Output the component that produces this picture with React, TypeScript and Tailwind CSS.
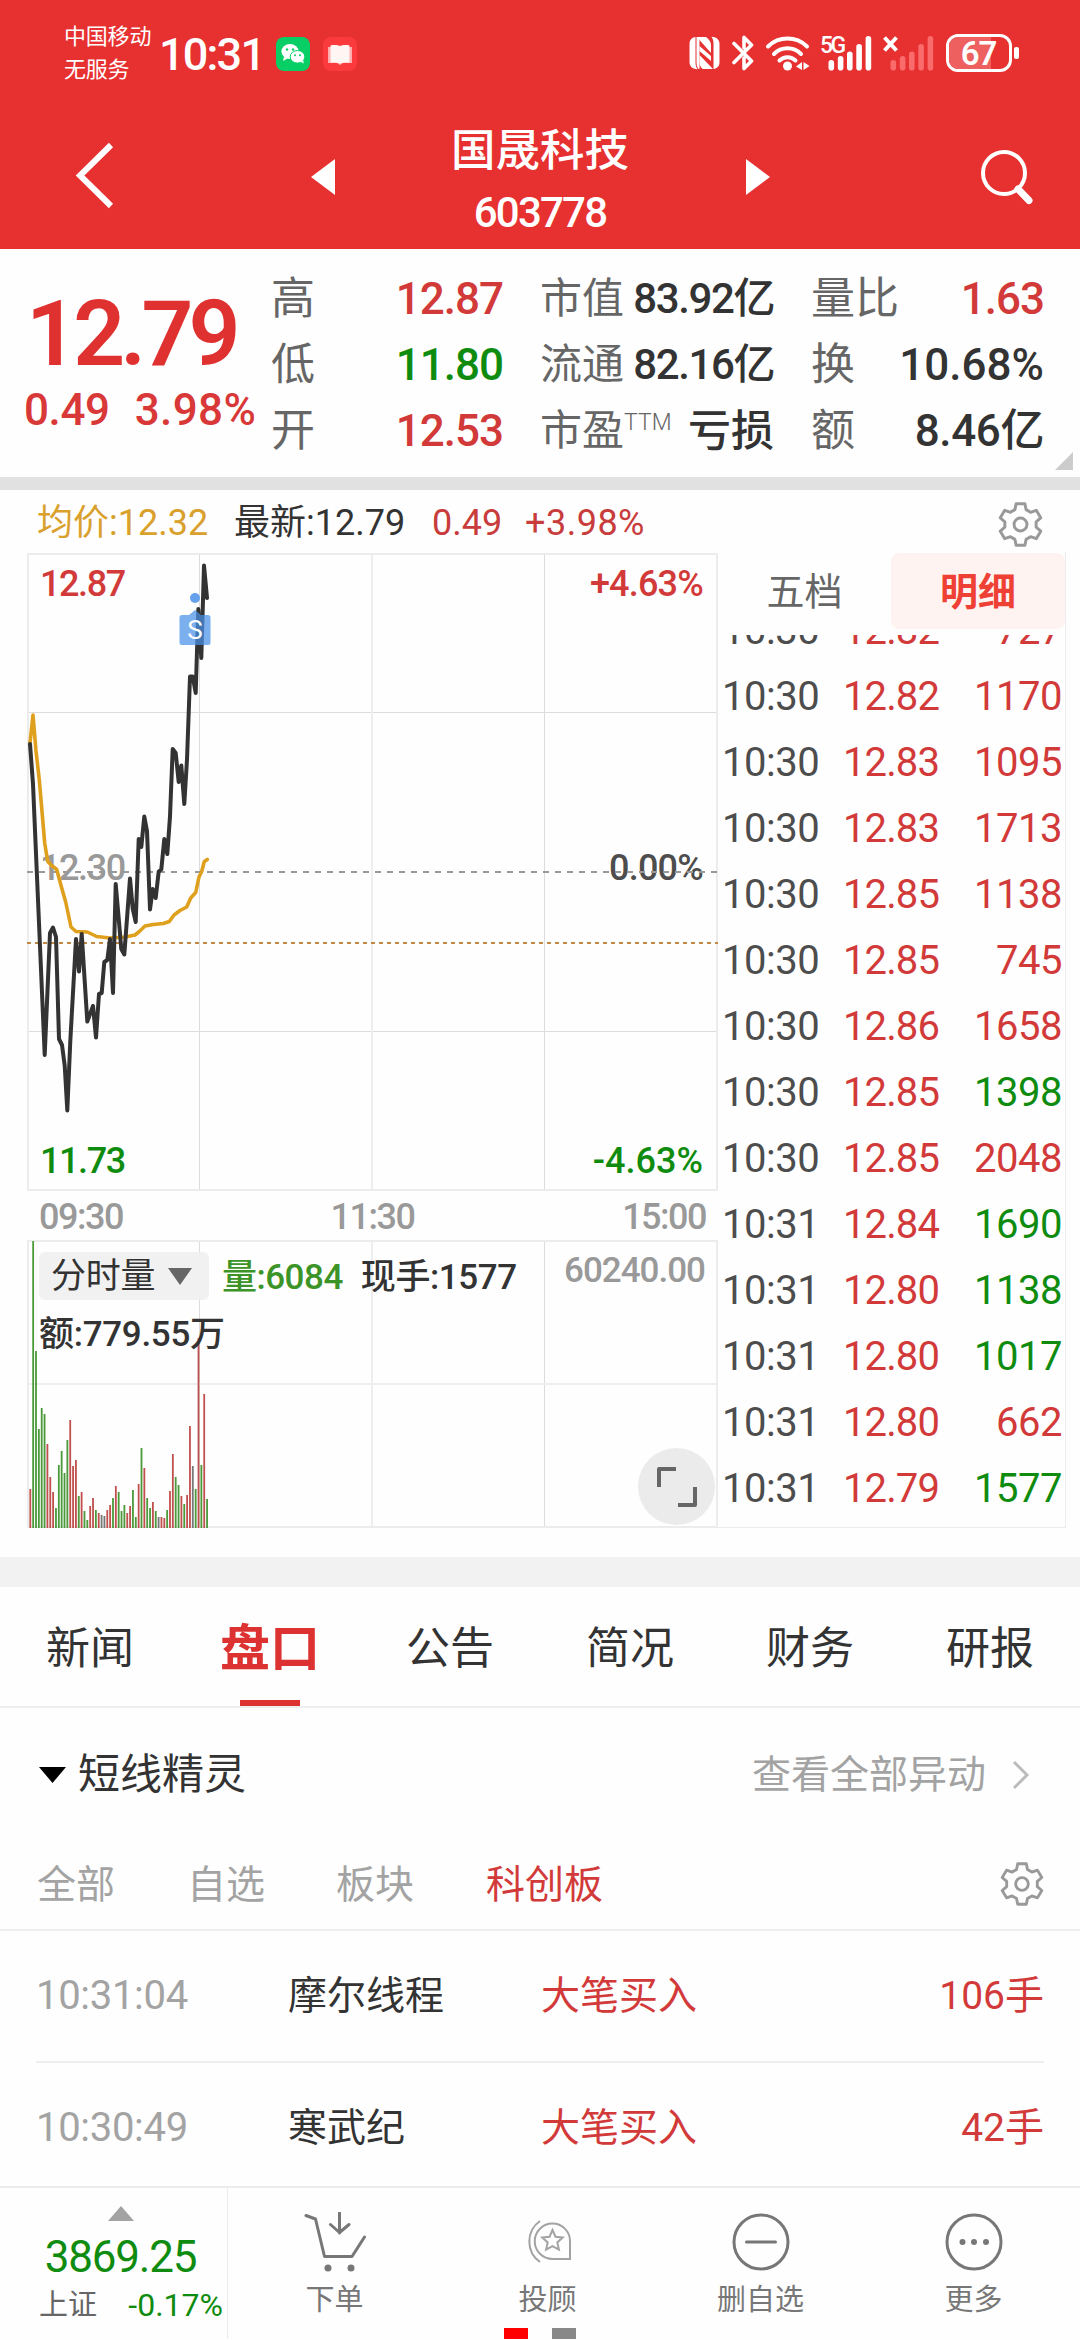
import type { ReactNode } from 'react';

type Tone = 'up' | 'down' | 'plain';

interface Trade {
  time: string;
  price: string;
  volume: string;
  tone: Tone;
}

const toneClass: Record<Tone, string> = {
  up: 'text-[#d23a3a]',
  down: 'text-[#0f8c0f]',
  plain: 'text-[#333333]',
};

const trades: Trade[] = [
  { time: '10:30', price: '12.82', volume: '727', tone: 'up' },
  { time: '10:30', price: '12.82', volume: '1170', tone: 'up' },
  { time: '10:30', price: '12.83', volume: '1095', tone: 'up' },
  { time: '10:30', price: '12.83', volume: '1713', tone: 'up' },
  { time: '10:30', price: '12.85', volume: '1138', tone: 'up' },
  { time: '10:30', price: '12.85', volume: '745', tone: 'up' },
  { time: '10:30', price: '12.86', volume: '1658', tone: 'up' },
  { time: '10:30', price: '12.85', volume: '1398', tone: 'down' },
  { time: '10:30', price: '12.85', volume: '2048', tone: 'up' },
  { time: '10:31', price: '12.84', volume: '1690', tone: 'down' },
  { time: '10:31', price: '12.80', volume: '1138', tone: 'down' },
  { time: '10:31', price: '12.80', volume: '1017', tone: 'down' },
  { time: '10:31', price: '12.80', volume: '662', tone: 'up' },
  { time: '10:31', price: '12.79', volume: '1577', tone: 'down' },
];

const pricePoints =
  '3,192 6,232 17.7,503 23,381 26,375.5 29,385 32,487 35,493 37.7,513.5 40.3,558.5 43.3,489 49,387 52,419.5 54.7,382 60.3,469.5 66,454 69,485.5 72,442 74.7,441 77.3,410 80.3,408 83,387 86,441 88.7,332 91.7,366.5 94.3,397 97.3,402.5 103,326.5 105.7,356.5 108.7,370 111.7,287 114.3,295 117.3,264.5 120,279 123,357.5 125.7,337 128.7,346 131.7,319.5 134.3,317.5 137.3,287 140.3,302 143,264.5 145.7,197 148.7,201 151.7,230 154.3,213.5 157.3,252 160,207.5 163,124.5 165.7,124.5 168.7,141 171.3,57 174.3,106 177,13.5 180,46';

const averagePoints =
  '3,191 6,163 9,199 12.3,228 17.7,291 20.7,309.5 24.7,313.5 29.7,317.5 34.7,336 38.7,350 44,375 49,379.5 60.3,380 69.7,384.5 83,386 98,385 108,383 112.3,379.5 118,374 126.3,372.5 136.3,371.5 142.3,369.5 147,363 153,358.5 159.7,355 163.7,346 168.7,340.5 172,325 174.7,319.5 177.3,309.5 180.3,307.5';

const volumeHeights = [
  39, 287, 177, 99, 120, 114, 84, 51, 36, 20, 63, 77, 55, 88, 108, 62, 68, 32, 36, 17, 8, 22, 30, 18, 15, 13, 12, 18, 23,
  30, 42, 36, 17, 23, 15, 22, 38, 11, 44, 80, 60, 30, 20, 26, 17, 11, 11, 10, 18, 37, 74, 51, 43, 32, 24, 33, 102, 62,
  39, 190, 63, 134, 29,
];
// r = up, g = down, x = unchanged
const volumeTones = 'rgggggrrrgggggrrrgrggrrgrxxrrgrgggrrggrgrggrgxrrgrrggrgrrxgrgrg';
const barColors: Record<string, string> = { r: '#c0504d', g: '#4a9a3a', x: '#777777' };

const GearIcon = ({ size }: { size: number }) => (
  <svg width={size} height={size} viewBox="0 0 46 46" fill="none" stroke="#999999" strokeWidth="3" strokeLinejoin="round">
    <path d="M18.5 1.8h9l1.2 6 4.6 2.7 5.8-2 4.6 7.7-4.7 4v5.6l4.7 4-4.6 7.7-5.8-2-4.6 2.7-1.2 6h-9l-1.2-6-4.6-2.7-5.8 2-4.6-7.7 4.7-4v-5.6l-4.7-4 4.6-7.7 5.8 2 4.6-2.7z" />
    <circle cx="23" cy="23" r="6.6" />
  </svg>
);

const SignalBars = ({ className }: { className?: string }) => (
  <svg width="44" height="36" viewBox="0 0 44 36" className={className}>
    <rect x="0.5" y="25" width="5.6" height="10.5" rx="2.8" fill="currentColor" />
    <rect x="9.8" y="21" width="5.6" height="14.5" rx="2.8" fill="currentColor" />
    <rect x="19" y="16.5" width="5.6" height="19" rx="2.8" fill="currentColor" />
    <rect x="28.3" y="9" width="5.6" height="26.5" rx="2.8" fill="currentColor" />
    <rect x="37.6" y="1" width="5.6" height="34.5" rx="2.8" fill="currentColor" />
  </svg>
);

const StatusBar = () => (
  <div className="flex h-[106px] items-center pl-[64px] pr-[61px] text-white">
    <div className="w-[95px] text-[22px] leading-[33px] tracking-[-0.2px]">
      <div>中国移动</div>
      <div>无服务</div>
    </div>
    <div className="w-[116px] pt-[3px] text-[45px] leading-none font-medium tracking-[-1.8px]">10:31</div>
    <svg width="34" height="34" viewBox="0 0 34 34" className="ml-[1px] mt-[1px]">
      <rect width="34" height="34" rx="8" fill="#08cf65" />
      <ellipse cx="14" cy="14.5" rx="8.6" ry="7.4" fill="white" />
      <path d="M8 20l-1 4 4.5-2.5z" fill="white" />
      <ellipse cx="21.5" cy="19.8" rx="7.3" ry="6.3" fill="white" stroke="#08cf65" strokeWidth="1" />
      <path d="M25 25l2.6 1.5-.4-3.5z" fill="white" />
      <circle cx="11" cy="12.5" r="1.2" fill="#08cf65" />
      <circle cx="17" cy="12.5" r="1.2" fill="#08cf65" />
      <circle cx="19" cy="18.3" r="1" fill="#08cf65" />
      <circle cx="24" cy="18.3" r="1" fill="#08cf65" />
    </svg>
    <svg width="34" height="34" viewBox="0 0 34 34" className="ml-[13px] mt-[1px]">
      <rect width="34" height="34" rx="8" fill="#fb3a3c" />
      <path d="M5 10h24v16h-9l-3 2-3-2H5z" fill="#ffb0ae" />
      <path d="M7.500 8.500c3-.8 7-.6 9.500.4 2.500-1 6.500-1.200 9.500-.4v17c-3-.3-7 0-9.500 1-2.500-1-6.500-1.300-9.500-1z" fill="#fff5f3" />
    </svg>

    <div className="ml-auto flex items-center">
      <svg width="31" height="34" viewBox="0 0 31 34" fill="white">
        <path d="M6.5 1C2.500 1.500 0.500 4 0.500 8v18c0 4 2.500 7 8 7.200C7 31 6.500 29 6.500 26z" />
        <path d="M24.500 33c4-.5 6-3 6-7V8c0-4-2.500-7-8-7.200C24 3 24.500 5 24.500 8z" />
        <path d="M8.500 1h8.500c3 2 5 5 5 8v8L10.500 4z" />
        <path d="M10.500 10L22 20v5L10.500 15z" />
        <path d="M10.500 19L24 33H13.500c-2-2-3-4-3-7z" />
        <path d="M7.500 1h3v32h-1c-1.500-2-2-4-2-7z" />
      </svg>
      <svg width="22" height="36" viewBox="0 0 22 36" className="ml-[12px]" fill="none" stroke="white" strokeWidth="3.6" strokeLinecap="round" strokeLinejoin="round">
        <path d="M2 8.500L19.500 26l-7.500 7.500V23M2 27.500L19.500 10 12 2.500V13" />
      </svg>
      <svg width="46" height="36" viewBox="0 0 46 36" className="ml-[11px]" fill="none" stroke="white" strokeWidth="4" strokeLinecap="round">
        <path d="M3 11.500a28 28 0 0 1 39 0" />
        <path d="M9 19a19 19 0 0 1 27 0" />
        <path d="M14.500 25.500a11.500 11.500 0 0 1 16 0" />
        <circle cx="22.5" cy="31" r="4.5" fill="white" stroke="none" />
        <path d="M37 27v8l-6-3.500zM38.500 27v8l6-4z" fill="white" stroke="none" />
      </svg>
      <div className="relative ml-[17px] h-[36px] w-[44px]">
        <SignalBars />
        <span className="absolute -left-[8px] -top-[1px] text-[23px] leading-none font-medium tracking-[-2.5px]">5G</span>
      </div>
      <div className="relative ml-[18px] h-[36px] w-[44px]">
        <SignalBars className="text-[#fa6b6b]" />
        <svg width="15" height="16" viewBox="0 0 15 16" className="absolute -left-[7px] top-[1px]" stroke="white" strokeWidth="4">
          <path d="M1.500 1.500l12 13M13.500 1.500l-12 13" />
        </svg>
      </div>
      <div className="ml-[12px] flex items-center gap-[2px]">
        <div className="relative flex h-[38px] w-[66px] items-center justify-center overflow-hidden rounded-[12px] border-3 border-white">
          <div className="absolute inset-y-0 left-0 w-[42px] bg-[#ee6060]" />
          <span className="relative pt-[1px] pr-[1px] text-[33px] leading-none font-semibold tracking-[-1px]">67</span>
        </div>
        <div className="h-[12px] w-[5px] rounded-[2px] bg-white" />
      </div>
    </div>
  </div>
);

const TitleBar = () => (
  <div className="flex h-[143px] items-center text-white">
    <svg width="40" height="68" viewBox="0 0 40 68" className="ml-[75px] mb-[5px]" fill="none" stroke="white" strokeWidth="6">
      <path d="M36 4L5 34.500 36 65" />
    </svg>
    <svg width="24" height="36" viewBox="0 0 24 36" className="ml-[196px] mb-[1px]">
      <path d="M24 0v36L0 18z" fill="white" />
    </svg>
    <div className="flex w-[410px] flex-col items-center pt-[5px]">
      <div className="text-[44.5px] leading-[56px] font-medium">国晟科技</div>
      <div className="pt-[10px] text-[42px] leading-[48px] font-medium tracking-[-1.8px]">603778</div>
    </div>
    <svg width="24" height="36" viewBox="0 0 24 36" className="mb-[1px] ml-[1px]">
      <path d="M0 0v36l24-18z" fill="white" />
    </svg>
    <svg width="54" height="56" viewBox="0 0 54 56" className="ml-[210px] mb-[2px]" fill="none" stroke="white">
      <circle cx="24" cy="24" r="21" strokeWidth="4" />
      <path d="M38 40l11 11.500" strokeWidth="7" strokeLinecap="round" />
    </svg>
  </div>
);

interface StatProps {
  label: ReactNode;
  value: string;
  tone?: Tone;
  valueClass?: string;
}

const Stat = ({ label, value, tone = 'plain', valueClass = 'text-[44px] tracking-[-1px]' }: StatProps) => (
  <div className="flex h-[66px] items-center justify-between leading-none whitespace-nowrap">
    <span className="text-[#666666]">{label}</span>
    <span className={`font-medium ${toneClass[tone]} ${valueClass}`}>{value}</span>
  </div>
);

const QuotePanel = () => (
  <div className="relative box-content flex h-[228px] border-b-[13px] border-[#e1e1e1]">
    <div className="flex w-[271px] flex-col text-[#e03131]">
      <div className="mt-[41px] pl-[26px] text-[91px] leading-[88px] font-semibold tracking-[-4.8px]">12.79</div>
      <div className="flex gap-[25px] pt-[5px] pl-[24px] text-[44px] leading-[54px] font-medium tracking-[-0.4px] text-[#d93838]">
        <span>0.49</span>
        <span className="tracking-[0.4px]">3.98%</span>
      </div>
    </div>
    <div className="w-[232px] pt-[17px] text-[44px]">
      <Stat label="高" value="12.87" tone="up" />
      <Stat label="低" value="11.80" tone="down" />
      <Stat label="开" value="12.53" tone="up" />
    </div>
    <div className="ml-[37px] w-[234px] pt-[17px] text-[42px]">
      <Stat label="市值" value="83.92亿" valueClass="text-[42px] tracking-[-1.4px]" />
      <Stat label="流通" value="82.16亿" valueClass="text-[42px] tracking-[-1.4px]" />
      <Stat
        label={
          <span className="flex items-start">
            市盈<span className="pt-[1px] text-[23px] leading-none font-light">TTM</span>
          </span>
        }
        value="亏损"
        valueClass="text-[43px]"
      />
    </div>
    <div className="ml-[37px] w-[233px] pt-[17px] text-[44px]">
      <Stat label="量比" value="1.63" tone="up" />
      <Stat label="换" value="10.68%" valueClass="text-[44px]" />
      <Stat label="额" value="8.46亿" valueClass="text-[44px] tracking-[-0.4px]" />
    </div>
    <svg width="18" height="18" viewBox="0 0 18 18" className="absolute right-[7px] bottom-[7px]">
      <path d="M18 0v18H0z" fill="#cccccc" />
    </svg>
  </div>
);

const PriceChart = () => (
  <div className="relative h-[640px] w-[691px]">
    <svg width="691" height="640" viewBox="0 0 691 640" fill="none">
      <path d="M172.500 2v636M517.500 2v636M0 160.500h691M0 479.500h691" stroke="#dcdcdc" />
      <path d="M345 2v636" stroke="#eeeeee" strokeWidth="2" />
      <rect x="1" y="2" width="689" height="636" stroke="#ececec" strokeWidth="2" />
    </svg>
    <div className="absolute inset-0 text-[36px] leading-none font-medium tracking-[-1.4px]">
      <div className="flex h-full flex-col justify-between pt-[14px] pr-[15px] pb-[13px] pl-[13px]">
        <div className={`flex justify-between ${toneClass.up}`}>
          <span>12.87</span>
          <span className="tracking-[-0.8px]">+4.63%</span>
        </div>
        <div className="flex justify-between pb-[9px]">
          <span className="text-[#999999]">12.30</span>
          <span className="tracking-[-0.8px] text-[#4d4d4d]">0.00%</span>
        </div>
        <div className={`flex justify-between ${toneClass.down}`}>
          <span>11.73</span>
          <span className="tracking-[0px]">-4.63%</span>
        </div>
      </div>
    </div>
    <svg width="691" height="640" viewBox="0 0 691 640" fill="none" className="absolute inset-0">
      <path d="M0 320h691" stroke="#999999" strokeWidth="2" strokeDasharray="6 6" />
      <path d="M0 391h691" stroke="#c08a45" strokeWidth="2" strokeDasharray="4 4" />
      <polyline points={averagePoints} stroke="#dfa01e" strokeWidth="3.6" strokeLinejoin="round" strokeLinecap="round" />
      <polyline points={pricePoints} stroke="#333333" strokeWidth="4" strokeLinejoin="round" strokeLinecap="round" />
      <circle cx="168" cy="46" r="5" fill="#64a0ec" />
      <path d="M155 63h7l6-5 6 5h7a2.500 2.500 0 0 1 2.500 2.500v25a2.500 2.500 0 0 1-2.500 2.500h-26a2.500 2.500 0 0 1-2.500-2.500v-25a2.500 2.500 0 0 1 2.500-2.500z" fill="#4a90e8" fillOpacity="0.72" />
      <text x="168" y="87" textAnchor="middle" fill="white" fontSize="26" fontFamily="Roboto, sans-serif">
        S
      </text>
    </svg>
  </div>
);

const VolumeChart = () => (
  <div className="relative h-[288px] w-[691px]">
    <svg width="691" height="288" viewBox="0 0 691 288" fill="none">
      <path d="M172.500 0v287M517.500 0v287" stroke="#dcdcdc" />
      <path d="M345 0v287M0 144h691" stroke="#eeeeee" strokeWidth="2" />
      <rect x="1" y="1" width="689" height="286" stroke="#ececec" strokeWidth="2" />
      {volumeHeights.map((h, i) => (
        <rect key={i} x={2.4 + i * 2.851} y={288 - h} width="1.8" height={h} fill={barColors[volumeTones[i]]} />
      ))}
    </svg>
    <div className="absolute inset-0 pt-[12px] pr-[13px] pl-[12px] text-[35px] leading-none font-medium tracking-[-0.3px] text-[#333333]">
      <div className="flex items-start">
        <div className="flex h-[48px] w-[170px] items-center gap-[13px] rounded-[6px] bg-[#f1f1f1] pt-[1px] pl-[12px] font-normal">
          分时量
          <svg width="24" height="17" viewBox="0 0 24 17">
            <path d="M0 0h24L12 17z" fill="#666666" />
          </svg>
        </div>
        <span className="pt-[8px] pl-[13px] tracking-[-0.5px] text-[#3c9428]">量:6084</span>
        <span className="pt-[8px] pl-[18px] tracking-[-0.4px]">现手:1577</span>
        <span className="ml-auto pt-[1px] tracking-[-1px] text-[#999999]">60240.00</span>
      </div>
      <div className="pt-[17px]">额:779.55万</div>
    </div>
    <div className="absolute right-[3px] bottom-[3px] flex h-[77px] w-[77px] items-center justify-center rounded-full bg-[#ebebeb]">
      <svg width="40" height="40" viewBox="0 0 40 40" fill="none" stroke="#666666" strokeWidth="4" strokeLinejoin="round">
        <path d="M2 20V2h17M21 38h17V20" />
      </svg>
    </div>
  </div>
);

const TradeList = () => (
  <div className="flex w-[348px] flex-col border-r border-b border-[#ececec]">
    <div className="flex h-[83px] pt-px text-[38px]">
      <div className="flex h-[76px] w-[173px] items-center justify-center pt-[3px] text-[#666666]">五档</div>
      <div className="flex h-[76px] w-[174px] items-center justify-center rounded-[8px] bg-[#fff3f1] pt-[3px] font-bold text-[#ee4035]">
        明细
      </div>
    </div>
    <div className="h-[891px] overflow-hidden">
      <div className="-mt-[37px]">
        {trades.map((t, i) => (
          <div key={i} className="flex h-[66px] items-center pl-[4px] text-[40px] leading-none tracking-[-0.5px]">
            <span className="w-[121px] text-[#4d4d4d]">{t.time}</span>
            <span className={`tracking-[-0.9px] ${toneClass.up}`}>{t.price}</span>
            <span className={`ml-auto pr-[3px] ${toneClass[t.tone]}`}>{t.volume}</span>
          </div>
        ))}
      </div>
    </div>
  </div>
);

const ChartSection = () => (
  <div className="h-[1067px]">
    <div className="flex h-[62px] items-center pt-[3px] pr-[37px] pl-[37px] text-[36px] leading-none">
      <span className="w-[197px] text-[#d9a02c]">均价:12.32</span>
      <span className="w-[198px] text-[#333333]">最新:12.79</span>
      <span className="w-[93px] text-[#c83c3c]">0.49</span>
      <span className="tracking-[0.5px] text-[#c83c3c]">+3.98%</span>
      <span className="ml-auto pt-[4px]">
        <GearIcon size={45} />
      </span>
    </div>
    <div className="flex h-[976px] pl-[27px]">
      <div className="w-[691px]">
        <PriceChart />
        <div className="flex h-[48px] items-center justify-between pt-px pr-[12px] pl-[12px] text-[36px] leading-none font-medium tracking-[-1.5px] text-[#999999]">
          <span>09:30</span>
          <span>11:30</span>
          <span>15:00</span>
        </div>
        <VolumeChart />
      </div>
      <TradeList />
    </div>
  </div>
);

const tabs = ['新闻', '盘口', '公告', '简况', '财务', '研报'];

const InfoTabs = () => (
  <div className="flex h-[121px] border-b-2 border-[#eeeeee]">
    {tabs.map((tab) =>
      tab === '盘口' ? (
        <div key={tab} className="flex w-[180px] flex-col items-center justify-between text-[50px] font-bold text-[#dc3232]">
          <span className="pt-[38px] leading-[48px]">{tab}</span>
          <span className="h-[6px] w-[60px] bg-[#dc3232]" />
        </div>
      ) : (
        <div key={tab} className="flex w-[180px] justify-center pt-[40px] text-[44px] leading-[44px] text-[#333333]">
          {tab}
        </div>
      ),
    )}
  </div>
);

const AlertSection = () => (
  <div className="h-[478px]">
    <div className="flex h-[131px] items-center pt-[3px] pr-[50px] pl-[39px] leading-none">
      <svg width="27" height="16" viewBox="0 0 27 16">
        <path d="M0 0h27L13.500 16z" fill="black" />
      </svg>
      <span className="pl-[12px] text-[42px] text-[#333333]">短线精灵</span>
      <span className="ml-auto text-[39px] text-[#a3a3a3]">查看全部异动</span>
      <svg width="18" height="30" viewBox="0 0 18 30" className="ml-[26px]" fill="none" stroke="#bbbbbb" strokeWidth="3">
        <path d="M2 2l13 13L2 28" />
      </svg>
    </div>
    <div className="flex h-[92px] items-center border-b-2 border-[#eeeeee] pt-[2px] pr-[36px] pl-[37px] text-[39px] leading-none text-[#a3a3a3]">
      <span className="w-[150px]">全部</span>
      <span className="w-[149px]">自选</span>
      <span className="w-[150px]">板块</span>
      <span className="text-[#d23a3a]">科创板</span>
      <span className="ml-auto pb-[2px]">
        <GearIcon size={44} />
      </span>
    </div>
    <div className="px-[36px] text-[39px] leading-none">
      <div className="flex h-[132px] items-center border-b-2 border-[#eeeeee]">
        <span className="w-[252px] text-[40px] tracking-[-0.3px] text-[#a3a3a3]">10:31:04</span>
        <span className="w-[253px] text-[#333333]">摩尔线程</span>
        <span className="text-[#d23a3a]">大笔买入</span>
        <span className="ml-auto text-[#d23a3a]">106手</span>
      </div>
      <div className="flex h-[130px] items-center">
        <span className="w-[252px] text-[40px] tracking-[-0.3px] text-[#a3a3a3]">10:30:49</span>
        <span className="w-[253px] text-[#333333]">寒武纪</span>
        <span className="text-[#d23a3a]">大笔买入</span>
        <span className="ml-auto text-[#d23a3a]">42手</span>
      </div>
    </div>
  </div>
);

const NavItem = ({ label, children }: { label: string; children: ReactNode }) => (
  <div className="flex w-[213px] flex-col items-center pt-[24px]">
    <svg width="62" height="60" viewBox="0 0 62 60" fill="none" stroke="#777777" strokeWidth="3">
      {children}
    </svg>
    <span className="pt-[12px] text-[29px] leading-[32px] text-[#777777]">{label}</span>
  </div>
);

const BottomBar = () => (
  <div className="relative flex h-[153px] border-t-2 border-[#ececec]">
    <div className="flex w-[228px] flex-col items-center border-r border-[#ececec]">
      <svg width="26" height="15" viewBox="0 0 26 15" className="mt-[18px] ml-[14px]">
        <path d="M13 0l13 15H0z" fill="#a3a3a3" />
      </svg>
      <div className="pt-[14px] pl-[14px] text-[44px] leading-[44px] tracking-[-1.2px] text-[#0f8c0f]">3869.25</div>
      <div className="flex w-full items-center justify-between pt-[9px] pr-[4px] pl-[39px] leading-[34px]">
        <span className="text-[29px] text-[#666666]">上证</span>
        <span className="text-[32px] tracking-[0px] text-[#0f8c0f]">-0.17%</span>
      </div>
    </div>
    <NavItem label="下单">
      <path d="M2 3.500l9.500 3.500 9 37.500h27.500L60.500 25M35.500 1v20M26.500 12.500l9 8 9.500-8" strokeLinecap="round" strokeLinejoin="round" />
      <circle cx="24" cy="56" r="3.5" fill="#777777" stroke="none" />
      <circle cx="47" cy="56" r="3.5" fill="#777777" stroke="none" />
    </NavItem>
    <NavItem label="投顾">
      <g stroke="#a3a3a3" strokeWidth="2">
        <path d="M23 9a25 25 0 0 0 0 41" />
        <path d="M35.500 11.500a17.500 17.500 0 0 1 17.500 17.500v18h-17.500a17.500 17.500 0 0 1 0-35.500z" />
        <path d="M35.500 18l3 6.700 7.200.8-5.400 4.900 1.600 7.200-6.400-3.400-6.400 3.400 1.600-7.200-5.400-4.900 7.200-.8z" />
      </g>
    </NavItem>
    <NavItem label="删自选">
      <circle cx="31" cy="30" r="27" />
      <path d="M16.500 30h29" strokeLinecap="round" />
    </NavItem>
    <NavItem label="更多">
      <circle cx="31" cy="30" r="27" />
      <g fill="#777777" stroke="none">
        <circle cx="19.5" cy="30" r="3" />
        <circle cx="31" cy="30" r="3" />
        <circle cx="43" cy="30" r="3" />
      </g>
    </NavItem>
    <div className="absolute bottom-0 left-[504px] flex gap-[24px]">
      <span className="h-[11px] w-[24px] bg-[#ff0000]" />
      <span className="h-[11px] w-[24px] bg-[#888888]" />
    </div>
  </div>
);

export default function App() {
  return (
    <div className="flex h-[2340px] w-[1080px] flex-col overflow-hidden bg-[#fefefe] font-['Roboto','Noto_Sans_CJK_SC',sans-serif]">
      <div className="h-[249px] shrink-0 bg-[#e73030]">
        <StatusBar />
        <TitleBar />
      </div>
      <QuotePanel />
      <ChartSection />
      <div className="h-[30px] shrink-0 bg-[#f2f2f2]" />
      <InfoTabs />
      <AlertSection />
      <BottomBar />
    </div>
  );
}
